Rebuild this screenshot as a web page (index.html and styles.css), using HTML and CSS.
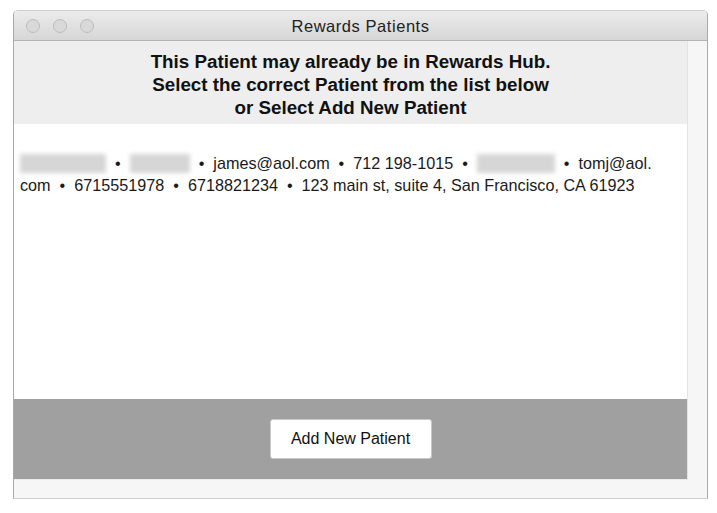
FILE: index.html
```html
<!DOCTYPE html>
<html>
<head>
<meta charset="utf-8">
<title>Rewards Patients</title>
<link rel="stylesheet" href="styles.css">
</head>
<body>
<div class="window">
  <div class="titlebar">
    <div class="lights">
      <span class="light"></span>
      <span class="light"></span>
      <span class="light"></span>
    </div>
    <div class="title">Rewards Patients</div>
    <div class="spacer"></div>
  </div>
  <div class="frame">
    <div class="panel">
      <div class="header">
        <p class="notice">This Patient may already be in Rewards Hub.<br>Select the correct Patient from the list below<br>or Select Add New Patient</p>
      </div>
      <div class="content">
        <p class="match"><span class="redact r1"></span>  •  <span class="redact r2"></span>  •  james@aol.com  •  712 198-1015  •  <span class="redact r3"></span>  •  tomj@aol.
com  •  6715551978  •  6718821234  •  123 main st, suite 4, San Francisco, CA 61923</p>
      </div>
      <div class="footer">
        <button class="btn">Add New Patient</button>
      </div>
    </div>
    <div class="side"></div>
  </div>
</div>
</body>
</html>
```
FILE: styles.css
```css
html, body {
  margin: 0;
  padding: 0;
  background: #ffffff;
}
body {
  font-family: "Liberation Sans", Arial, sans-serif;
}
.window {
  box-sizing: border-box;
  margin: 10px 0 0 13px;
  width: 695px;
  height: 489px;
  border: 1px solid #a9a9a9;
  border-top-color: #cfcfcf;
  border-bottom-color: #d0d0d0;
  border-radius: 5px 5px 0 0;
  overflow: hidden;
  display: flex;
  flex-direction: column;
}
.titlebar {
  box-sizing: border-box;
  height: 30px;
  flex: none;
  display: grid;
  grid-template-columns: 1fr auto 1fr;
  align-items: center;
  background: linear-gradient(#ececec, #d6d6d6);
  border-bottom: 1px solid #b4b4b4;
}
.lights {
  display: flex;
  gap: 13px;
  padding-left: 12px;
}
.light {
  box-sizing: border-box;
  width: 14px;
  height: 14px;
  border-radius: 50%;
  background: #d9d9d9;
  border: 1px solid #bdbdbd;
}
.title {
  font-size: 16.5px;
  letter-spacing: 0.55px;
  color: #222222;
  padding-top: 1px;
}
.frame {
  flex: 1;
  display: flex;
  background: #f6f6f6;
}
.panel {
  width: 674px;
  height: 439px;
  display: flex;
  flex-direction: column;
  border-right: 1px solid #e3e3e3;
  border-bottom: 1px solid #ebebeb;
  box-sizing: border-box;
}
.side {
  flex: 1;
}
.header {
  height: 83px;
  flex: none;
  background: #eeeeee;
  box-sizing: border-box;
  padding-top: 9px;
}
.notice {
  margin: 0;
  text-align: center;
  font-weight: bold;
  font-size: 18.8px;
  line-height: 23px;
  color: #111111;
}
.content {
  flex: 1;
  background: #ffffff;
  box-sizing: border-box;
  padding: 28px 6px 0 6px;
}
.match {
  margin: 0;
  font-size: 16.2px;
  line-height: 22px;
  color: #1a1a1a;
  white-space: pre;
}
.redact {
  display: inline-block;
  height: 19px;
  vertical-align: -4px;
  background: #d6d6d6;
  filter: blur(2px);
}
.r1 { width: 86px; }
.r2 { width: 60px; }
.r3 { width: 78px; }
.footer {
  height: 80px;
  flex: none;
  background: #a0a0a0;
  display: flex;
  align-items: center;
  justify-content: center;
}
.btn {
  width: 162px;
  height: 40px;
  background: #ffffff;
  border: 1px solid #c9c9c9;
  border-radius: 3px;
  font-family: "Liberation Sans", Arial, sans-serif;
  font-size: 16px;
  color: #111111;
  padding: 0;
}
```
